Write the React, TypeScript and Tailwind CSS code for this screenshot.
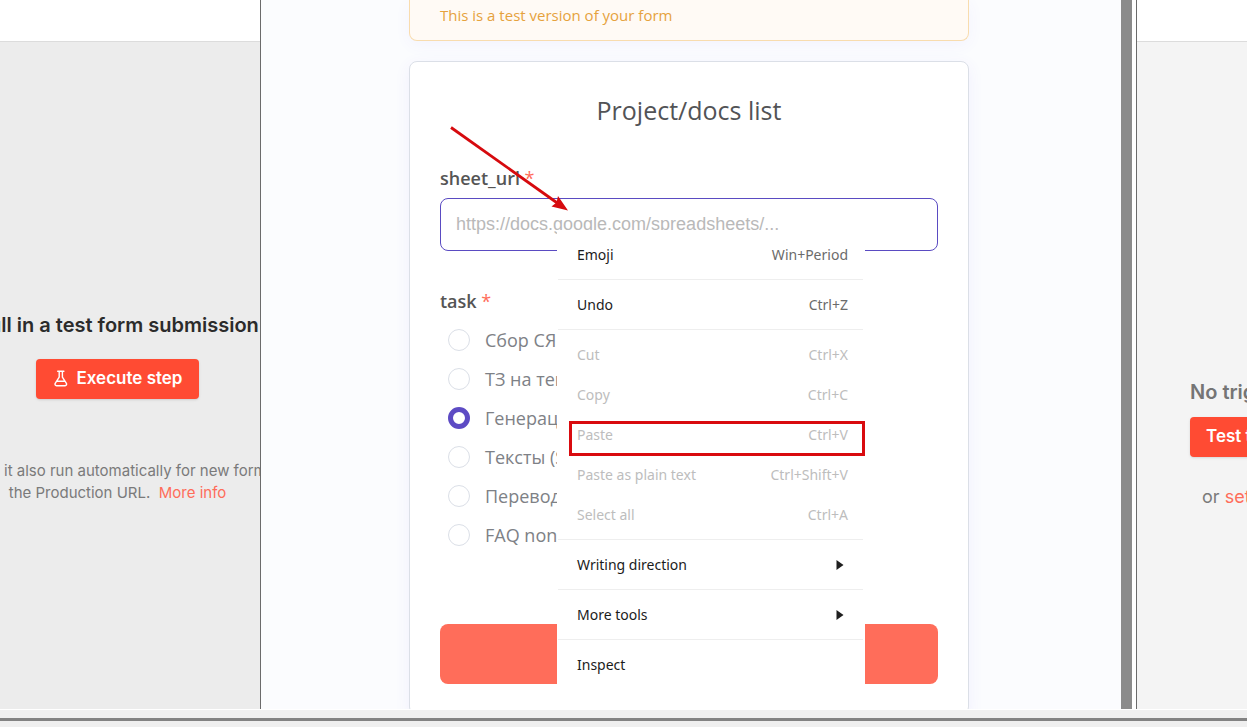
import React from "react";

type MenuItem = {
  label: string;
  shortcut?: string;
  disabled?: boolean;
  submenu?: boolean;
  divided?: boolean;
};

const menuItems: MenuItem[] = [
  { label: "Emoji", shortcut: "Win+Period" },
  { label: "Undo", shortcut: "Ctrl+Z", divided: true },
  { label: "Cut", shortcut: "Ctrl+X", disabled: true, divided: true },
  { label: "Copy", shortcut: "Ctrl+C", disabled: true },
  { label: "Paste", shortcut: "Ctrl+V", disabled: true },
  { label: "Paste as plain text", shortcut: "Ctrl+Shift+V", disabled: true },
  { label: "Select all", shortcut: "Ctrl+A", disabled: true },
  { label: "Writing direction", submenu: true, divided: true },
  { label: "More tools", submenu: true, divided: true },
  { label: "Inspect", divided: true },
];

const tasks = ["Сбор СЯ", "ТЗ на тек", "Генерац", "Тексты (S", "Перевод", "FAQ non-"];

function FlaskIcon() {
  return (
    <svg width="16" height="18" viewBox="0 0 16 18" fill="none" stroke="currentColor" strokeWidth="1.4" strokeLinecap="round" strokeLinejoin="round" aria-hidden="true">
      <path d="M4.7 1.2h6.2M6.2 1.4v5.7L2.200 13.400a1.500 1.500 0 0 0 1.300 2.300h8.600a1.500 1.500 0 0 0 1.300-2.300L9.4 7.1V1.4M4.2 11.2h7.2" />
    </svg>
  );
}

function ContextMenu() {
  return (
    <div role="menu" className="absolute top-[168px] left-[147px] w-[308px] bg-white pt-1 pr-0.5 pl-px font-['Noto_Sans','Open_Sans',sans-serif] text-sm">
      {menuItems.map((item) => (
        <React.Fragment key={item.label}>
          {item.divided && <div role="separator" className="flex h-2.5 items-center"><div className="h-px w-full bg-[#eeeeee]" /></div>}
          <button
            type="button"
            role="menuitem"
            disabled={item.disabled}
            className="flex h-10 w-full items-center justify-between pt-0.5 pr-[15px] pl-[19px] whitespace-nowrap text-[#1b1b1b] disabled:text-[#bdbdbd]"
          >
            <span>{item.label}</span>
            {item.shortcut && <span className={item.disabled ? "text-[#bdbdbd]" : "text-[#6b6b6b]"}>{item.shortcut}</span>}
            {item.submenu && (
              <svg width="8" height="10" viewBox="0 0 8 10" className="mr-1" aria-hidden="true">
                <path d="M0.5 0L7.5 5L0.5 10Z" fill="#1f1f1f" />
              </svg>
            )}
          </button>
        </React.Fragment>
      ))}
      <div className="pointer-events-none absolute top-[191px] left-3 h-[35px] w-[296px] border-3 border-[#d90b0f]" />
    </div>
  );
}

function FormCard() {
  return (
    <form className="relative rounded-lg border border-[#dbdfe7] bg-white p-[30px] shadow-[0_4px_16px_rgba(99,77,255,0.07)]">
      <h1 className="text-center text-[25px] leading-9 text-[#525356]">Project/docs list</h1>

      <label htmlFor="sheet-url" className="mt-[38px] block text-lg leading-6 font-semibold text-[#555555]">
        sheet_url <span className="font-normal text-[#ff6d5a]">*</span>
      </label>
      <input
        id="sheet-url"
        type="text"
        placeholder="https://docs.google.com/spreadsheets/..."
        className="mt-2 block h-[53px] w-full rounded-lg border border-[#5a4bc2] bg-white px-[15px] font-['Liberation_Sans',Arial,sans-serif] text-lg outline-none placeholder:text-[#b9b9b9]"
      />

      <fieldset className="mt-[38px]">
        <legend className="text-lg leading-6 font-semibold text-[#555555]">
          task <span className="font-normal text-[#ff6d5a]">*</span>
        </legend>
        <div className="mt-[7px]">
          {tasks.map((task, index) => (
            <label key={task} className="flex h-[39px] items-center gap-[15px] pl-2 text-lg whitespace-nowrap text-[#7e8186]">
              <input
                type="radio"
                name="task"
                defaultChecked={index === 2}
                className="size-[22px] shrink-0 appearance-none rounded-full border border-[#dbdfe7] bg-white checked:border-5 checked:border-[#5d4bc4]"
              />
              {task}
            </label>
          ))}
        </div>
      </fieldset>

      <button type="submit" aria-label="Submit" className="mt-[70px] block h-[60px] w-full rounded-lg bg-[#ff6d5a]" />

      <ContextMenu />

      <svg className="pointer-events-none absolute top-16 left-10 h-[90px] w-[122px]" viewBox="0 0 122 90" aria-hidden="true">
        <path d="M1 1.5L108 77.500" stroke="#d60a0e" strokeWidth="2.8" fill="none" />
        <path d="M118 84.500L101.500 80.500L106.500 76.500L108 70Z" fill="#d60a0e" />
      </svg>
    </form>
  );
}

export default function App() {
  return (
    <div className="flex h-screen flex-col overflow-hidden bg-white font-['Inter',sans-serif]">
      <div className="flex min-h-0 flex-1 overflow-hidden">
        <aside className="flex w-[260px] shrink-0 flex-col overflow-hidden">
          <div className="h-[42px] shrink-0 border-b border-[#dcdcdc] bg-white" />
          <div className="flex flex-1 flex-col items-center bg-[#ececec] pt-[269px] pr-[25px] whitespace-nowrap">
            <h2 className="text-xl leading-7 font-semibold text-[#2b2b2b]">Pull in a test form submission</h2>
            <button type="button" className="mt-5 flex h-10 items-center gap-2 rounded bg-[#ff4b33] px-[17px] text-[17px] font-semibold text-white shadow-sm">
              <FlaskIcon />
              Execute step
            </button>
            <p className="mt-[61px] w-full text-[15px] leading-[22px] text-[#7a7a7a]">
              <span className="block pl-1">it also run automatically for new form</span>
              <span className="block text-center">
                the Production URL.&nbsp; <a href="#more-info" className="text-[#ff6d5a]">More info</a>
              </span>
            </p>
          </div>
        </aside>

        <main className="flex min-w-0 flex-1 border-l border-[#6b6b6b] bg-[#fbfcfe] font-['Open_Sans','Noto_Sans',sans-serif]">
          <div className="min-w-0 flex-1 overflow-hidden pr-1">
            <div className="mx-auto max-w-[560px]">
              <div className="rounded-b-lg border border-t-0 border-[#f8dcae] bg-[#fffaf5] px-[30px] pt-[3px] pb-[13px] text-[15px] leading-6 text-[#e6a23d] shadow-[0_4px_16px_rgba(99,77,255,0.05)]">
                This is a test version of your form
              </div>
              <div className="mt-5">
                <FormCard />
              </div>
            </div>
          </div>
          <div className="w-[11px] shrink-0 bg-[#8b8b8b]" />
          <div className="w-1 shrink-0 bg-white" />
        </main>

        <aside className="flex w-[111px] shrink-0 flex-col overflow-hidden border-l border-[#6b6b6b]">
          <div className="h-[42px] shrink-0 border-b border-[#dcdcdc] bg-white" />
          <div className="flex flex-1 flex-col items-start bg-[#f4f4f4] pt-[336px] pl-[53px] whitespace-nowrap">
            <h2 className="text-xl leading-7 font-semibold text-[#757575]">No trigger</h2>
            <button type="button" className="mt-[11px] h-10 rounded bg-[#ff4b33] px-4 text-[17px] font-semibold text-white shadow-sm">
              Test this trigger
            </button>
            <p className="mt-7 pl-3 text-lg leading-6 text-[#7a7a7a]">
              or <a href="#set-data" className="text-[#ff6d5a]">set mock data</a>
            </p>
          </div>
        </aside>
      </div>
      <footer className="mt-px h-[17px] shrink-0 bg-[#efefef] pt-2">
        <div className="h-[3px] bg-[#828282]" />
      </footer>
    </div>
  );
}
